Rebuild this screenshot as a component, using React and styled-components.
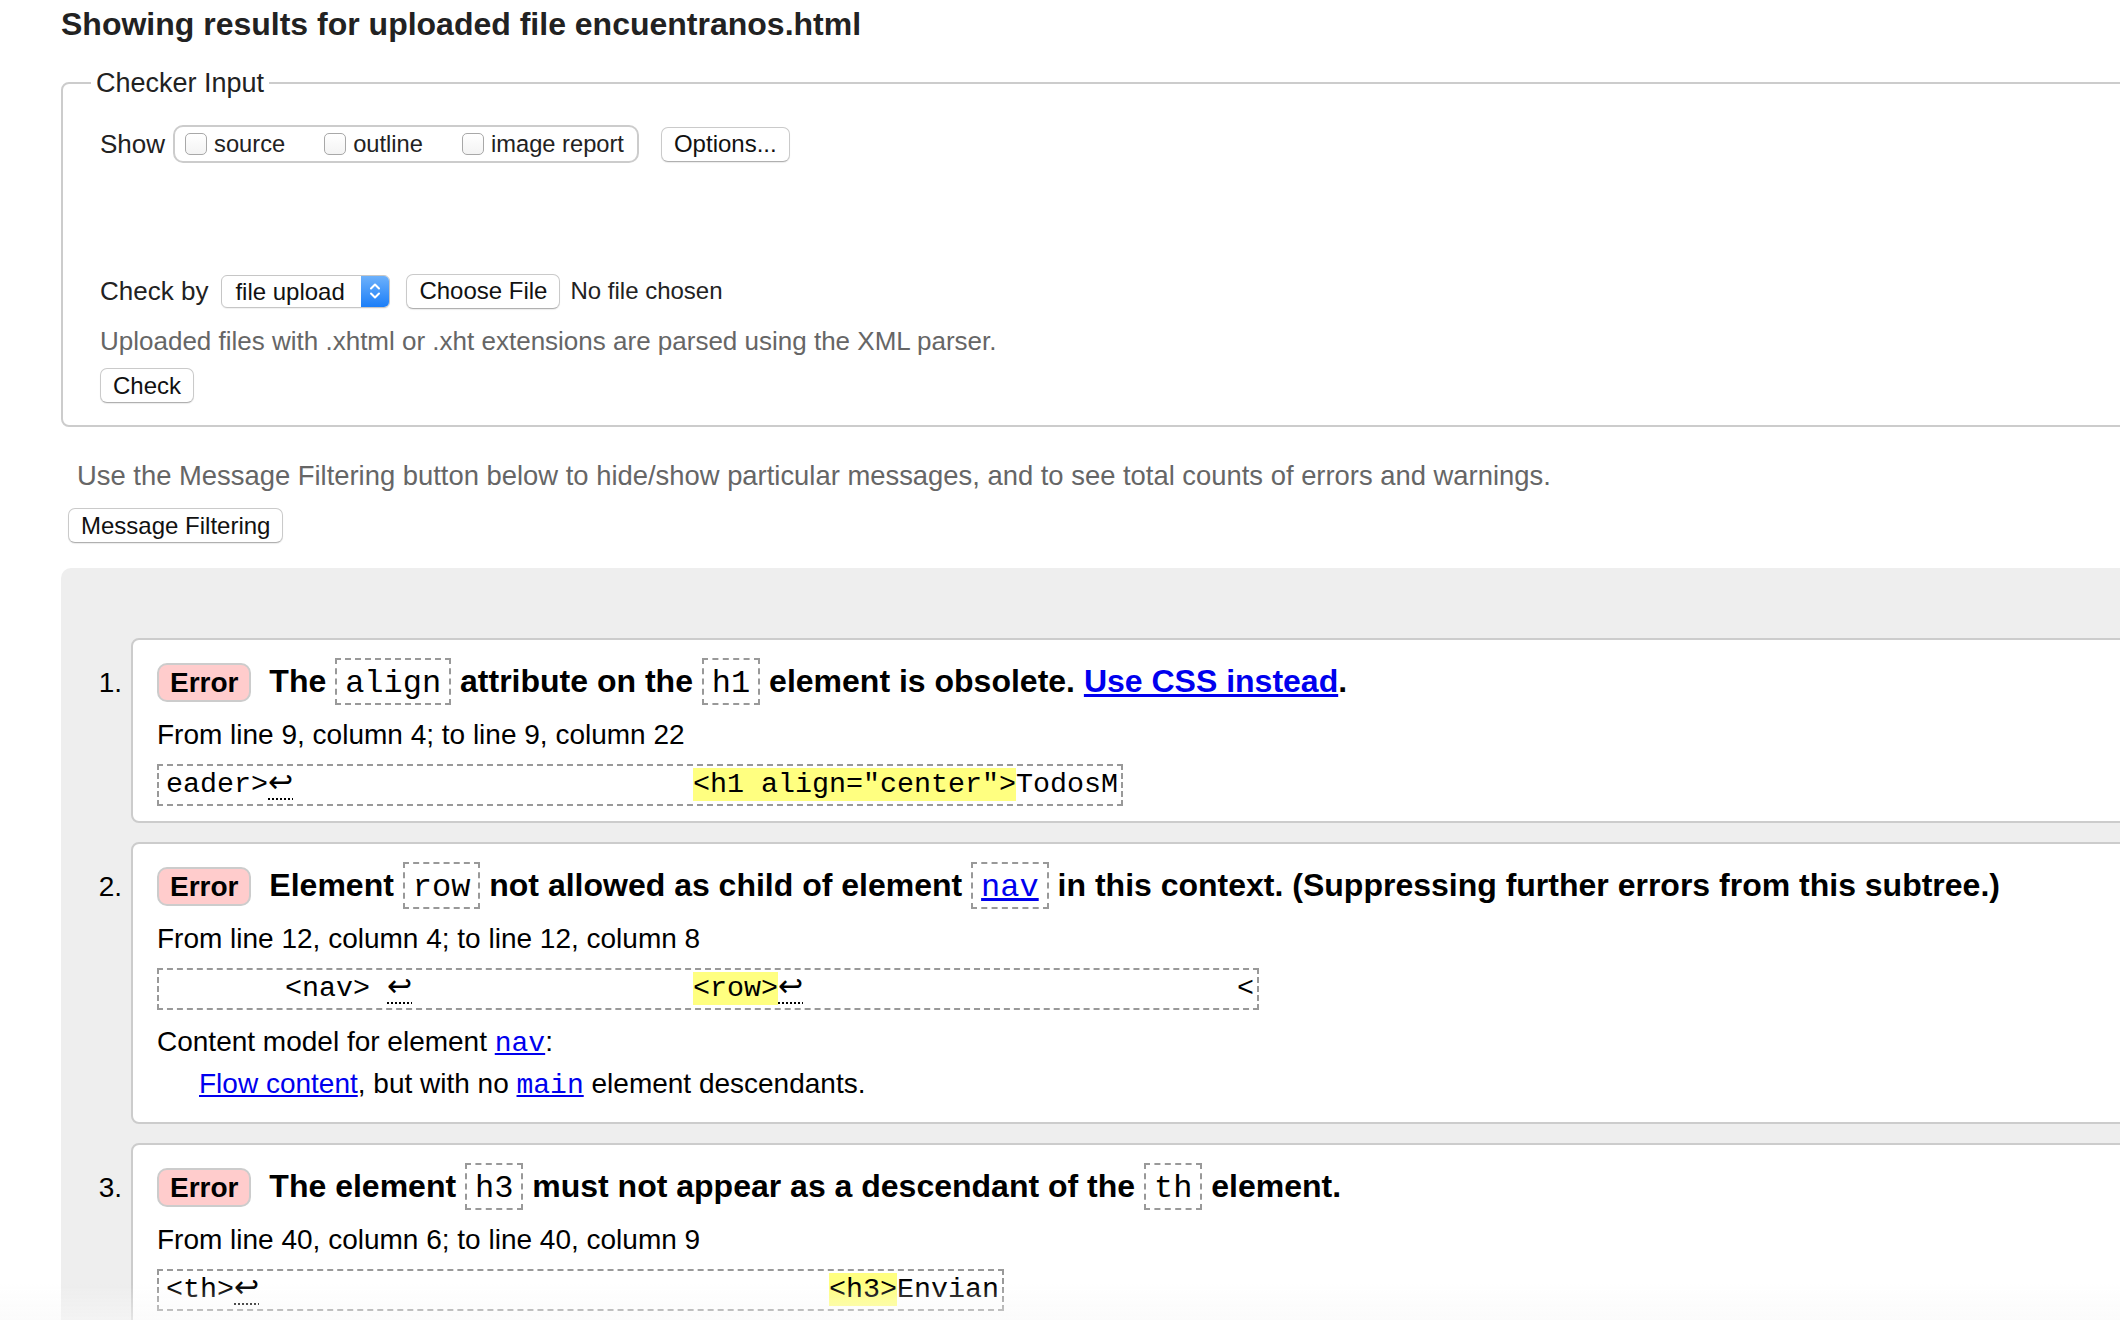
import styled, { createGlobalStyle } from 'styled-components'

const GlobalStyle = createGlobalStyle`
  html, body {
    margin: 0;
    padding: 0;
    background: #fff;
    overflow: hidden;
  }
  body {
    font-family: "Liberation Sans", Arial, Helvetica, sans-serif;
    color: #000;
  }
`

const Chevrons = () => (
  <svg width="16" height="24" viewBox="0 0 16 24" fill="none">
    <path d="M4 9.5 L8 5.5 L12 9.5" stroke="#fff" strokeWidth="2" strokeLinecap="round" strokeLinejoin="round" />
    <path d="M4 14.5 L8 18.5 L12 14.5" stroke="#fff" strokeWidth="2" strokeLinecap="round" strokeLinejoin="round" />
  </svg>
)

const LF = () => <LineFeed>↩</LineFeed>

const sp = (n) => ' '.repeat(n)

const App = () => {
  return (
    <>
      <GlobalStyle />
      <Page>
        <Title>Showing results for uploaded file encuentranos.html</Title>

        <CheckerFieldset>
          <Legend>Checker Input</Legend>
          <Row>
            <Label>Show</Label>
            <ToggleGroup>
              <Toggle><CheckBox />source</Toggle>
              <Toggle><CheckBox />outline</Toggle>
              <Toggle><CheckBox />image report</Toggle>
            </ToggleGroup>
            <Button $ml={22}>Options...</Button>
          </Row>

          <Row $top={107}>
            <Label>Check by</Label>
            <Select>
              <SelectValue>file upload</SelectValue>
              <Stepper><Chevrons /></Stepper>
            </Select>
            <Button>Choose File</Button>
            <FileName>No file chosen</FileName>
          </Row>
          <Hint>Uploaded files with .xhtml or .xht extensions are parsed using the XML parser.</Hint>
          <Button $mt={9}>Check</Button>
        </CheckerFieldset>

        <FilterNote>
          Use the Message Filtering button below to hide/show particular messages, and to see total counts of errors and warnings.
        </FilterNote>
        <FilterButton>Message Filtering</FilterButton>

        <Results>
          <MessageList>
            <MessageItem>
              <Num>1.</Num>
              <Card>
                <MessageText>
                  <Badge>Error</Badge> The <Code>align</Code> attribute on the <Code>h1</Code> element is obsolete.{' '}
                  <Link href="#">Use CSS instead</Link>.
                </MessageText>
                <Location>From line 9, column 4; to line 9, column 22</Location>
                <Extract>
                  {'eader>'}<LF />{sp(24)}<Mark>{'<h1 align="center">'}</Mark>{'TodosM'}
                </Extract>
              </Card>
            </MessageItem>

            <MessageItem>
              <Num>2.</Num>
              <Card>
                <MessageText>
                  <Badge>Error</Badge> Element <Code>row</Code> not allowed as child of element{' '}
                  <Code><Link href="#">nav</Link></Code> in this context. (Suppressing further errors from this subtree.)
                </MessageText>
                <Location>From line 12, column 4; to line 12, column 8</Location>
                <Extract>
                  {sp(7) + '<nav> '}<LF />{sp(17)}<Mark>{'<row>'}</Mark><LF />{sp(26) + '<'}
                </Extract>
                <Definition>
                  Content model for element <InlineCode href="#">nav</InlineCode>:
                  <DefinitionItem>
                    <Link href="#">Flow content</Link>, but with no <InlineCode href="#">main</InlineCode> element descendants.
                  </DefinitionItem>
                </Definition>
              </Card>
            </MessageItem>

            <MessageItem>
              <Num>3.</Num>
              <Card>
                <MessageText>
                  <Badge>Error</Badge> The element <Code>h3</Code> must not appear as a descendant of the <Code>th</Code> element.
                </MessageText>
                <Location>From line 40, column 6; to line 40, column 9</Location>
                <Extract>
                  {'<th>'}<LF />{sp(34)}<Mark>{'<h3>'}</Mark>{'Envian'}
                </Extract>
              </Card>
            </MessageItem>
          </MessageList>
        </Results>
      </Page>
      <ScrollFade />
    </>
  )
}

export default App

const Page = styled.div`
  width: 2400px;
  padding: 4px 0 0 61px;
  box-sizing: border-box;
`

const Title = styled.h2`
  margin: 0;
  font-size: 32px;
  line-height: 40px;
  font-weight: bold;
  color: #222;
`

const CheckerFieldset = styled.fieldset`
  margin: 24px 0 0;
  padding: 26px 0 22px 37px;
  border: 2px solid #ccc;
  border-radius: 8px;
  min-width: 0;
`

const Legend = styled.legend`
  margin-left: -9px;
  padding: 0 5px;
  font-size: 27px;
  line-height: 30px;
  color: #222;
`

const Row = styled.div`
  display: flex;
  align-items: center;
  min-height: 40px;
  margin-top: ${(p) => p.$top || 0}px;
`

const Label = styled.span`
  font-size: 26px;
  color: #222;
  margin-right: 8px;
`

const ToggleGroup = styled.div`
  display: flex;
  align-items: center;
  gap: 39px;
  height: 38px;
  padding: 0 13px 0 10px;
  border: 2px solid #ccc;
  border-radius: 10px;
  box-sizing: border-box;
`

const Toggle = styled.label`
  display: flex;
  align-items: center;
  gap: 7px;
  font-size: 23.7px;
  color: #222;
`

const CheckBox = styled.span`
  width: 22px;
  height: 22px;
  box-sizing: border-box;
  border: 1px solid #a8a8a8;
  border-radius: 5px;
  background: linear-gradient(#fff, #f3f3f3);
`

const Button = styled.button`
  display: block;
  height: 35px;
  margin: ${(p) => p.$mt || 0}px 0 0 ${(p) => p.$ml || 0}px;
  padding: 0 12px;
  font-family: inherit;
  font-size: 24px;
  color: #111;
  background: #fff;
  border: 1px solid #cacaca;
  border-bottom-color: #b0b0b0;
  border-radius: 7px;
  box-shadow: 0 1px 1px rgba(0, 0, 0, 0.08);
`

const Select = styled.div`
  display: flex;
  width: 169px;
  height: 33px;
  margin: 0 16px 0 5px;
  box-sizing: border-box;
  border: 1px solid #c6c6c6;
  border-radius: 6px;
  overflow: hidden;
  background: #fff;
  box-shadow: 0 1px 1px rgba(0, 0, 0, 0.06);
`

const SelectValue = styled.span`
  flex: 1;
  padding-left: 13px;
  font-size: 24px;
  line-height: 31px;
  color: #111;
`

const Stepper = styled.span`
  width: 28px;
  display: flex;
  align-items: center;
  justify-content: center;
  background: linear-gradient(#6db1fb, #1b7ef8);
`

const FileName = styled.span`
  margin-left: 10px;
  font-size: 24px;
  color: #222;
`

const Hint = styled.p`
  margin: 12px 0 0;
  font-size: 26px;
  line-height: 36px;
  color: #666;
`

const FilterNote = styled.p`
  margin: 31px 0 0;
  padding-left: 16px;
  font-size: 27.4px;
  line-height: 36px;
  color: #666;
`

const FilterButton = styled(Button)`
  margin: 14px 0 0 7px;
`

const Results = styled.div`
  margin-top: 25px;
  padding: 70px 0 300px;
  background: #eee;
  border-radius: 10px 0 0 0;
`

const MessageList = styled.ol`
  list-style: none;
  margin: 0;
  padding: 0;
  display: flex;
  flex-direction: column;
  gap: 19px;
`

const MessageItem = styled.li`
  display: flex;
  align-items: baseline;
`

const Num = styled.span`
  flex: none;
  width: 70px;
  padding-right: 9px;
  box-sizing: border-box;
  text-align: right;
  font-size: 28px;
`

const Card = styled.div`
  flex: 1;
  padding: 17px 24px 15px;
  background: #fff;
  border: 2px solid #ccc;
  border-radius: 8px;
`

const MessageText = styled.p`
  margin: 0;
  font-size: 32px;
  line-height: 48px;
  font-weight: bold;
`

const Badge = styled.span`
  display: inline-block;
  margin-right: 9px;
  padding: 0 11px;
  font-size: 28px;
  line-height: 35px;
  font-weight: bold;
  background: #fcc;
  border: 2px solid #ccc;
  border-radius: 10px;
`

const Code = styled.code`
  padding: 5px 8px 1px;
  font-family: "Liberation Mono", "Courier New", monospace;
  font-size: 32px;
  font-weight: normal;
  line-height: 30px;
  border: 2px dashed #999;
`

const Link = styled.a`
  color: #00e;
  text-decoration: underline;
`

const InlineCode = styled(Link)`
  font-family: "Liberation Mono", "Courier New", monospace;
  font-size: 28px;
  line-height: 28px;
`

const Location = styled.p`
  margin: 10px 0 0;
  font-size: 28px;
  line-height: 40px;
`

const Extract = styled.pre`
  width: fit-content;
  margin: 9px 0 0;
  padding: 0 3px 0 7px;
  font-family: "Liberation Mono", "Courier New", monospace;
  font-size: 28.33px;
  line-height: 38px;
  white-space: pre;
  border: 2px dashed #999;
`

const Mark = styled.mark`
  background: #ffff80;
  color: inherit;
`

const LineFeed = styled.span`
  display: inline-block;
  width: 17px;
  font-family: "DejaVu Sans", sans-serif;
  font-size: 30px;
  line-height: 28px;
  text-decoration: underline dotted;
  text-decoration-thickness: 2px;
  text-underline-offset: 6px;
`

const Definition = styled.div`
  margin: 12px 0 3px;
  font-size: 28px;
  line-height: 40px;
`

const DefinitionItem = styled.p`
  margin: 2px 0 0 42px;
`

const ScrollFade = styled.div`
  position: fixed;
  left: 0;
  right: 0;
  bottom: 0;
  height: 36px;
  background: linear-gradient(rgba(248, 248, 248, 0), rgba(248, 248, 248, 0.55));
  pointer-events: none;
`
